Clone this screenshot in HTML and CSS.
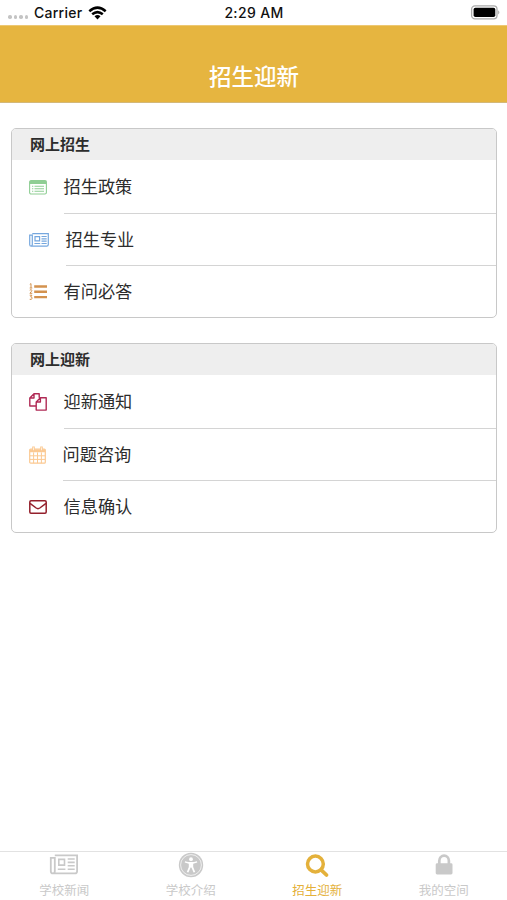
FILE: index.html
```html
<!DOCTYPE html>
<html lang="zh-CN">
<head>
<meta charset="utf-8">
<title>招生迎新</title>
<link rel="stylesheet" href="styles.css">
</head>
<body>
<div class="screen">
  <div class="status">
    <div class="status-left">
      <span class="dots"><i></i><i></i><i></i><i></i></span>
      <span class="carrier">Carrier</span>
      <svg class="wifi" width="19" height="14" viewBox="0 0 19 14" fill="none" stroke="#000" stroke-width="2.5"><path d="M1.3 5.2Q9.5-2 17.7 5.2M4.2 8.3Q9.5 3.9 14.8 8.3"/><path d="M6.5 10.3Q9.5 7.9 12.5 10.3L9.5 13.6Z" fill="#000" stroke="none"/></svg>
    </div>
    <span class="time">2:29 AM</span>
    <svg class="battery" width="31" height="15" viewBox="0 0 31 15"><rect x="1.6" y=".9" width="25.4" height="13" rx="3.4" fill="#fff" stroke="#aaa" stroke-width="1.3"/><rect x="3.6" y="2.8" width="21.7" height="9.3" rx="1.8"/><path d="M28.3 5.2q2 2.2 0 4.4z" fill="#999"/></svg>
  </div>
  <header class="navbar"><h1>招生迎新</h1></header>

  <main class="content">
    <section class="card">
      <h2>网上招生</h2>
      <div class="row">
        <svg class="icon" width="18" height="15" viewBox="0 0 18 15" fill="none" stroke="#8fce94"><rect x=".6" y=".6" width="16.8" height="13.4" rx="1.5" stroke-width="1.1"/><path d="M.7 2.4h16.6" stroke-width="3.2"/><path d="M3 6.2h1.3M5.5 6.2H15M3 8.7h1.3M5.5 8.7H15M3 11.2h1.3M5.5 11.2H15" stroke-width="1.1"/></svg>
        <span class="label">招生政策</span>
      </div>
      <div class="row row-wide">
        <svg class="icon" width="20" height="14" viewBox="0 0 20 14" fill="none" stroke="#75a7de" stroke-width="1.2"><path d="M3.3.7h16v10.8q0 1.6-1.6 1.6H2.2q-1.5 0-1.5-1.6V2.2h2.6v9.4q0 1.4-1.2 1.4"/><path d="M6 3.7h4.6v4.1H6zM5.4 10.5h5.8M12.5 3.5h5.2M12.5 5.8h5.2M12.5 8.1h5.2M12.5 10.5h5.2"/></svg>
        <span class="label">招生专业</span>
      </div>
      <div class="row">
        <svg class="icon" width="18" height="18" viewBox="0 0 18 18" fill="none" stroke="#d3924f"><path d="M5.2 3.5H18M5.2 8.8H18M5.2 14.1H18" stroke-width="2.4"/><path d="M.8 1.4 2 .6V5M.7 5h2.6M.7 7.2Q2.8 5.9 2.8 7.4 2.7 8.5.9 10.3h2.4M.7 12.2h2.2L1.7 13.9q1.5 0 1.4 1.3Q2.8 17 .7 16.3" stroke-width="1"/></svg>
        <span class="label">有问必答</span>
      </div>
    </section>

    <section class="card">
      <h2>网上迎新</h2>
      <div class="row">
        <svg class="icon" width="18" height="18" viewBox="0 0 18 18" fill="none" stroke="#b02a55" stroke-width="1.4" stroke-linejoin="round"><path d="M7.2 13H.8V5L5 .8h5.2v4M5 .8V5H.8M11.4 4.8h5.8v12.3H7.2V9l4.2-4.2V9H7.2"/></svg>
        <span class="label">迎新通知</span>
      </div>
      <div class="row row-narrow">
        <svg class="icon" width="17" height="18" viewBox="0 0 17 18" fill="none" stroke="#fbc992"><rect x=".7" y="3" width="15.6" height="14.2" rx="1" stroke-width="1.2"/><path d="M.8 4.7h15.4" stroke-width="3"/><path d="M.8 9.8h15.4M.8 13.4h15.4M4.6 6.4v10.8M8.5 6.4v10.8M12.4 6.4v10.8" stroke-width="1"/><path d="M4.5.5v4M12.5.5v4" stroke-width="2.6"/><path d="M4.5 1.4v2.8M12.5 1.4v2.8" stroke="#fff" stroke-width=".7"/></svg>
        <span class="label">问题咨询</span>
      </div>
      <div class="row">
        <svg class="icon" width="18" height="14" viewBox="0 0 18 14" fill="none" stroke="#94202c" stroke-width="1.5" stroke-linejoin="round"><rect x=".8" y=".8" width="16.4" height="12.4" rx="1.2"/><path d="M1 3.3 7.2 8q1.8 1.3 3.6 0L17 3.3"/></svg>
        <span class="label">信息确认</span>
      </div>
    </section>
  </main>

  <nav class="tabs">
    <div class="tab">
      <svg width="30" height="26" viewBox="0 0 30 26" fill="none" stroke="#c9c9c9" stroke-width="1.8"><path d="M5.8 3.4h22.3v15.8q0 2.2-2.2 2.2H4q-2.2 0-2.2-2.2V5.8h4v13.4q0 2.1-1.9 2.1"/><path d="M9.8 7.4h5.7v5.7H9.8zM8.8 17.2h7.6M18.7 7h7M18.7 10.4h7M18.7 13.8h7M18.7 17.2h7" stroke-width="1.6"/></svg>
      <span>学校新闻</span>
    </div>
    <div class="tab">
      <svg width="26" height="26" viewBox="0 0 26 26"><circle cx="13" cy="13" r="12.2" fill="#c9c9c9"/><circle cx="13" cy="13" r="10.4" fill="none" stroke="#fff" stroke-width=".7"/><circle cx="13" cy="7.2" r="1.9" fill="#fff"/><path d="M7.1 9.2q5.9 1.7 11.8 0l.4 1.3-4.1 1.3v3.1l2 5.1-1.6.6-2.2-5h-.8l-2.2 5-1.6-.6 2-5.1v-3.1l-4.1-1.3z" fill="#fff"/></svg>
      <span>学校介绍</span>
    </div>
    <div class="tab active">
      <svg width="26" height="26" viewBox="0 0 26 26" fill="none" stroke="#e4b13b"><circle cx="11.4" cy="12" r="7.9" stroke-width="3.5"/><path d="m17.1 17.8 5.4 5.2" stroke-width="3.8" stroke-linecap="round"/></svg>
      <span>招生迎新</span>
    </div>
    <div class="tab">
      <svg width="26" height="26" viewBox="0 0 26 26"><rect x="4.7" y="11.3" width="16.8" height="11.1" rx="1.4" fill="#c9c9c9"/><path d="M8.3 12V8.8a4.8 5.2 0 0 1 9.6 0V12" fill="none" stroke="#c9c9c9" stroke-width="2.7"/></svg>
      <span>我的空间</span>
    </div>
  </nav>
</div>
</body>
</html>
```
FILE: styles.css
```css
* { box-sizing: border-box; }
body {
  margin: 0;
  background: #fff;
  color: #2c2c2c;
  font-family: Inter, "Noto Sans CJK SC", sans-serif;
}
.screen { height: 900px; display: flex; flex-direction: column; }
.status {
  height: 25px;
  display: grid;
  grid-template-columns: 1fr auto 1fr;
  align-items: center;
  padding: 0 6px 0 8px;
  color: #111;
  font-size: 14px;
  font-weight: 500;
  line-height: 25px;
}
.status-left { display: flex; align-items: center; }
.dots { display: flex; gap: 2px; width: 26px; padding-top: 9px; }
.dots i { width: 3.5px; height: 3.5px; border-radius: 50%; background: #c4c4c4; }
.carrier { width: 54px; letter-spacing: .25px; }
.time { margin-right: 1px; letter-spacing: .35px; }
.battery { justify-self: end; }
.navbar {
  height: 78px;
  display: flex;
  justify-content: center;
  padding: 36px 0 0 1px;
  background: #e6b540;
  border-top: 1px solid #edc873;
  border-bottom: 1px solid #d3b879;
}
.navbar h1 {
  margin: 0;
  color: #fff;
  font-size: 22.5px;
  font-weight: 500;
  line-height: 30px;
}
.content {
  flex: 1;
  display: flex;
  flex-direction: column;
  gap: 25px;
  padding: 25px 10px 0 11px;
}
.card {
  height: 190px;
  border: 1px solid #c8c8c8;
  border-radius: 5px;
  overflow: hidden;
}
.card h2 {
  height: 31px;
  margin: 0 0 1px;
  padding-left: 18px;
  background: #eee;
  font-size: 15px;
  font-weight: 700;
  line-height: 32px;
}
.row { height: 52.5px; display: flex; align-items: center; padding-left: 17px; }
.row:last-child { height: 51.5px; }
.icon { flex: none; }
.row .label {
  flex: 1;
  height: 100%;
  margin-left: 16.5px;
  border-bottom: 1px solid #d4d4d4;
  font-size: 17.2px;
  line-height: 52px;
}
.row:last-child .label { border-bottom: 0; }
.tabs {
  height: 49px;
  display: grid;
  grid-template-columns: repeat(4, 1fr);
  padding-left: 1px;
  border-top: 1px solid #e2e2e2;
}
.tab {
  display: flex;
  flex-direction: column;
  align-items: center;
  color: #c9c9c9;
  font-size: 12.5px;
  line-height: 26px;
}
.tab svg { height: 26px; }
.active { color: #e4b13b; }
```
